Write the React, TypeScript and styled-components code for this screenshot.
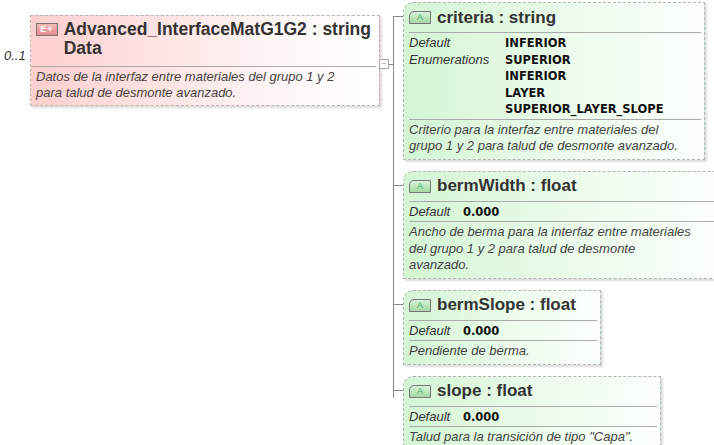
import React from 'react';
import styled, { createGlobalStyle } from 'styled-components';

const Global = createGlobalStyle`
  body { margin: 0; background: #fff; font-family: 'Liberation Sans', Arial, sans-serif; color: #333; }
`;

interface Attr {
  name: string;
  type: string;
  width: number;
  labelWidth: number;
  props: { label: string; values: string[] }[];
  doc: string[];
}

const attrs: Attr[] = [
  {
    name: 'criteria',
    type: 'string',
    width: 292,
    labelWidth: 96,
    props: [
      { label: 'Default', values: ['INFERIOR'] },
      { label: 'Enumerations', values: ['SUPERIOR', 'INFERIOR', 'LAYER', 'SUPERIOR_LAYER_SLOPE'] },
    ],
    doc: ['Criterio para la interfaz entre materiales del', 'grupo 1 y 2 para talud de desmonte avanzado.'],
  },
  {
    name: 'bermWidth',
    type: 'float',
    width: 309,
    labelWidth: 54,
    props: [{ label: 'Default', values: ['0.000'] }],
    doc: ['Ancho de berma para la interfaz entre materiales', 'del grupo 1 y 2 para talud de desmonte', 'avanzado.'],
  },
  {
    name: 'bermSlope',
    type: 'float',
    width: 188,
    labelWidth: 54,
    props: [{ label: 'Default', values: ['0.000'] }],
    doc: ['Pendiente de berma.'],
  },
  {
    name: 'slope',
    type: 'float',
    width: 248,
    labelWidth: 54,
    props: [{ label: 'Default', values: ['0.000'] }],
    doc: ['Talud para la transición de tipo "Capa".'],
  },
];

const App: React.FC = () => (
  <Page>
    <Global />
    <Left>
      <Mult>0..1</Mult>
      <ElementBox>
        <ElHead>
          <ElIcon>E+</ElIcon>
          <ElTitle>
            Advanced_InterfaceMatG1G2&nbsp;: string
            <br />
            Data
          </ElTitle>
        </ElHead>
        <Doc>
          Datos de la interfaz entre materiales del grupo 1 y 2
          <br />
          para talud de desmonte avanzado.
        </Doc>
        <Collapse>−</Collapse>
      </ElementBox>
    </Left>
    <Right>
      <Trunk />
      {attrs.map((a) => (
        <AttrRow key={a.name}>
          <AttrBox style={{ width: a.width }}>
            <AttrHead>
              <AIcon>A</AIcon>
              <span>
                {a.name}&nbsp;: {a.type}
              </span>
            </AttrHead>
            <Props>
              {a.props.map((p) => (
                <PropRow key={p.label}>
                  <PropLabel style={{ width: a.labelWidth }}>{p.label}</PropLabel>
                  <PropValues>
                    {p.values.map((v, i) => (
                      <div key={i}>{v}</div>
                    ))}
                  </PropValues>
                </PropRow>
              ))}
            </Props>
            <AttrDoc>
              {a.doc.map((d, i) => (
                <div key={i}>{d}</div>
              ))}
            </AttrDoc>
          </AttrBox>
        </AttrRow>
      ))}
    </Right>
  </Page>
);

const Page = styled.div`
  display: flex;
  align-items: flex-start;
  width: 714px;
  height: 445px;
  overflow: hidden;
`;

const Left = styled.div`
  display: flex;
  align-items: center;
  padding: 15px 0 0 4px;
`;

const Mult = styled.div`
  font-style: italic;
  font-size: 13px;
  width: 26px;
  margin-top: -10px;
`;

const ElementBox = styled.div`
  position: relative;
  width: 348px;
  height: 89px;
  border: 1px dashed #b4b4b4;
  background: linear-gradient(to right, #ffcfcf, #fff6f6 70%, #fff);
  box-shadow: 2px 2px 2px #ddd;
`;

const ElHead = styled.div`
  display: flex;
  align-items: flex-start;
  gap: 6px;
  padding: 4px 5px 0 5px;
  height: 46px;
  border-bottom: 1px solid #aaa;
  margin: 0 3px 0 0;
`;

const ElIcon = styled.div`
  width: 26px;
  height: 11px;
  margin-top: 3px;
  border: 1px solid #777;
  background: linear-gradient(#f6b8b8, #e08a8a);
  color: #fff;
  font-size: 9px;
  font-weight: bold;
  text-align: center;
  line-height: 11px;
  letter-spacing: 1px;
`;

const ElTitle = styled.div`
  font-weight: bold;
  font-size: 17.5px;
  line-height: 19px;
  color: #333;
  white-space: nowrap;
`;

const Doc = styled.div`
  padding: 2px 5px;
  font-style: italic;
  font-size: 13px;
  line-height: 16px;
  color: #444;
  white-space: nowrap;
`;

const Collapse = styled.div`
  position: absolute;
  right: -10px;
  top: 43px;
  width: 8px;
  height: 8px;
  border: 1px solid #aaa;
  background: #fff;
  font-size: 8px;
  line-height: 7px;
  text-align: center;
  color: #888;
  &::after {
    content: '';
    position: absolute;
    left: 9px;
    top: 4px;
    width: 4px;
    border-top: 1px solid #888;
  }
`;

const Right = styled.div`
  position: relative;
  display: flex;
  flex-direction: column;
  gap: 11px;
  margin-left: 23px;
  padding-top: 2px;
`;

const Trunk = styled.div`
  position: absolute;
  left: -10px;
  top: 16px;
  height: 382px;
  border-left: 1px solid #888;
`;

const AttrRow = styled.div`
  position: relative;
  &::before {
    content: '';
    position: absolute;
    left: -10px;
    top: 14px;
    width: 10px;
    border-top: 1px solid #888;
  }
`;

const AttrBox = styled.div`
  border: 1px dashed #b4b4b4;
  border-top-left-radius: 10px;
  background: linear-gradient(to right, #d4f5d4, #effcef 60%, #fbfffb);
  box-shadow: 2px 2px 2px #ddd;
  padding: 0 3px 4px 5px;
  white-space: nowrap;
`;

const AttrHead = styled.div`
  display: flex;
  align-items: center;
  gap: 6px;
  height: 29px;
  font-weight: bold;
  font-size: 17px;
  color: #333;
  border-bottom: 1px solid #aaa;
`;

const AIcon = styled.div`
  width: 20px;
  height: 11px;
  border: 1px solid #777;
  border-radius: 5px 0 0 0;
  background: linear-gradient(#d8f3d8, #a6d9a6);
  color: #3a6;
  font-size: 9px;
  text-align: center;
  line-height: 11px;
  font-weight: normal;
`;

const Props = styled.div`
  padding: 2px 0 1px;
  border-bottom: 1px solid #aaa;
`;

const PropRow = styled.div`
  display: flex;
  font-size: 13px;
  line-height: 16.5px;
`;

const PropLabel = styled.div`
  font-style: italic;
  color: #333;
`;

const PropValues = styled.div`
  font-family: 'DejaVu Sans', Verdana, sans-serif;
  font-weight: bold;
  font-size: 11.5px;
  color: #111;
`;

const AttrDoc = styled.div`
  padding-top: 2px;
  font-style: italic;
  font-size: 13px;
  line-height: 16.5px;
  color: #444;
`;

export default App;
